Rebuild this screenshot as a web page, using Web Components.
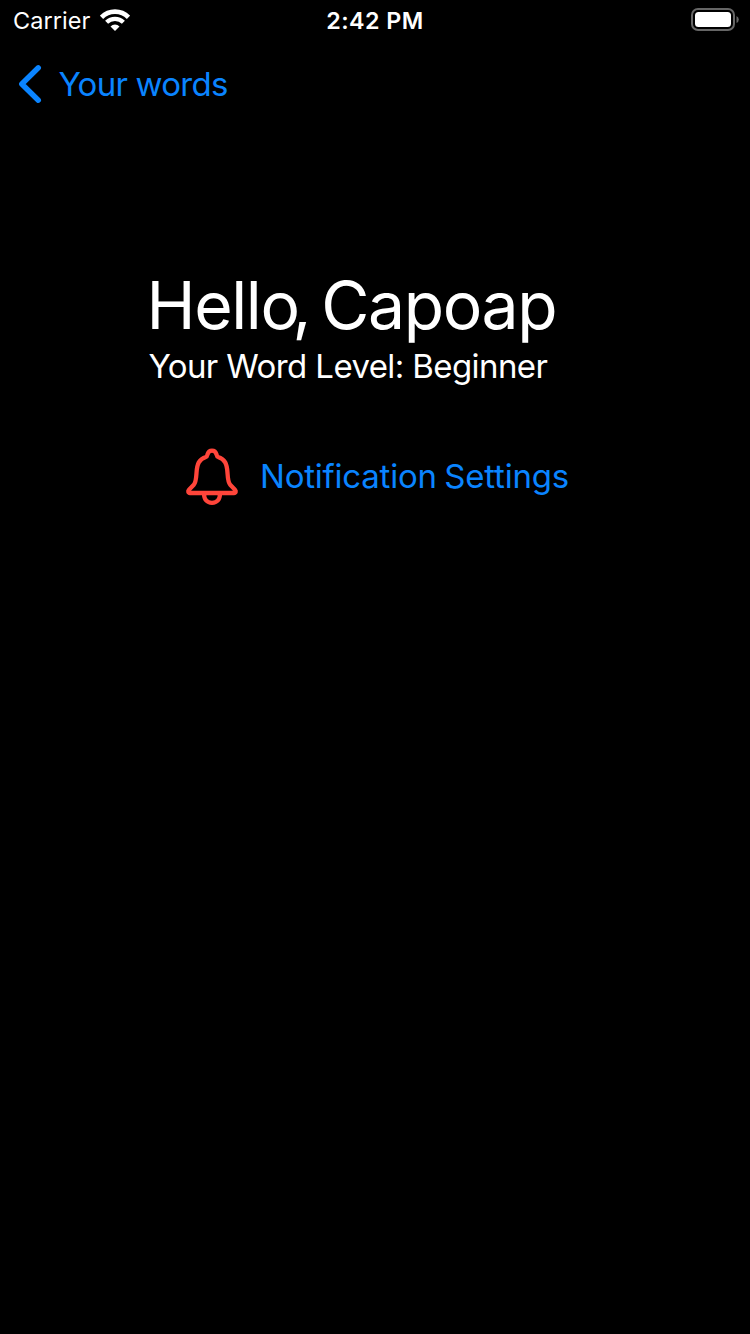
<!DOCTYPE html>
<html lang="en"><head><meta charset="utf-8"><title>Your words</title>
<style>html,body{margin:0;background:#000}</style></head>
<body><profile-screen></profile-screen>
<script>
const define=(name,html)=>customElements.define(name,class extends HTMLElement{
  constructor(){super();this.attachShadow({mode:'open'}).innerHTML=html;}
});
define('status-bar',`<style>
:host{display:grid;grid-template-columns:1fr auto 1fr;align-items:center;height:40px;box-sizing:border-box;padding:0 11px 0 13px;color:#fff;font-size:23.5px;line-height:40px}
.left{display:flex;align-items:center;gap:10px}.carrier{letter-spacing:.05px}
span{padding-top:1px}
.time{font-weight:580;font-size:23.3px;letter-spacing:.45px;padding-right:2px}
.battery{justify-self:end}svg{display:block;margin-bottom:2px}
</style><div class="left"><span class="carrier">Carrier</span>
<svg width="30" height="22" viewBox="0 0 30 22" fill="none" stroke="#fff"><path d="M1.5 8.3a19 19 0 0 1 27 0" stroke-width="4.6"/><path d="M6.6 13.3a11.8 11.8 0 0 1 16.8 0" stroke-width="4.2"/><path d="M10.5 17.5a6.3 6.3 0 0 1 9 0L15 22Z" fill="#fff" stroke="none"/></svg></div>
<span class="time">2:42 PM</span>
<svg class="battery" width="48" height="24" viewBox="0 0 48 24"><rect x="1" y="1" width="42" height="21" rx="6" fill="none" stroke="#666" stroke-width="2"/><rect x="4" y="4" width="36" height="15" rx="3.5" fill="#fff"/><path d="M45.5 8q2.3 1 2.3 3.5t-2.3 3.5Z" fill="#666"/></svg>`);
define('back-button',`<style>
:host{display:flex;align-items:center;height:88px;padding-left:18px;gap:15.5px;color:#0a84ff;font-size:33px;line-height:40px}
svg{display:block}span{letter-spacing:-.75px}
</style><svg width="25" height="40" viewBox="0 0 25 40"><path d="M20.3 3.8 3.8 20l16.5 16.2" fill="none" stroke="#0a84ff" stroke-width="5.4" stroke-linecap="round" stroke-linejoin="round"/></svg><span><slot></slot></span>`);
define('profile-greeting',`<style>
:host{display:block;padding:137px 0 0 149px;color:#fff}
h1,p{margin:0;font-weight:400;white-space:nowrap}
h1{font-size:66px;line-height:81px;letter-spacing:-1.4px;word-spacing:-6px;margin-left:-2.5px}
p{font-size:33px;line-height:40px;letter-spacing:-.6px;margin-left:-.5px}
</style><h1><slot name="name"></slot></h1><p><slot name="level"></slot></p>`);
define('settings-link',`<style>
:host{display:flex;align-items:center;padding:58px 0 0 182px;gap:18px;color:#0a84ff;font-size:33px;line-height:40px}
svg{display:block}span{letter-spacing:-.22px;word-spacing:-1.5px;white-space:nowrap}
</style><svg width="60" height="64" viewBox="0 0 60 64" fill="none" stroke="#ff453a" stroke-width="4.3" stroke-linejoin="round"><path d="M8 49H52C54 49 54.2 47 53 45.8L48.2 40.8C46 38.5 45.8 34 45.5 29C45 20 43 15 36 13C34.8 12.7 34.8 11.5 34.5 10.3C33.8 8 32.2 6.7 30 6.7S26.2 8 25.5 10.3C25.2 11.5 25.2 12.7 24 13C17 15 15 20 14.5 29C14.2 34 14 38.5 11.8 40.8L7 45.8C5.8 47 6 49 8 49Z"/><path d="M22 49.5C22 55.5 25 58.8 30 58.8S38 55.5 38 49.5"/></svg><span><slot></slot></span>`);
define('profile-screen',`<style>
:host{display:block;width:750px;height:1334px;overflow:hidden;background:#000;font-family:Inter,"Liberation Sans",sans-serif}
.kern{letter-spacing:-7.5px}
</style><status-bar></status-bar><back-button>Your words</back-button>
<profile-greeting><span slot="name">Hell<span class="kern">o</span>, Capoap</span><span slot="level">Your Word Level: Beginner</span></profile-greeting>
<settings-link>Notification Settings</settings-link>`);
</script></body></html>
